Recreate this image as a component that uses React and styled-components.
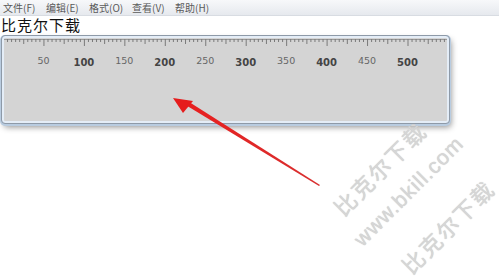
import React from "react";
import styled, { createGlobalStyle } from "styled-components";

const Global = createGlobalStyle`
  html, body { margin: 0; padding: 0; background: #fff; }
  body { font-family: "Noto Sans CJK SC", "Liberation Sans", sans-serif; overflow: hidden; }
`;

const Page = styled.div`
  position: relative;
  width: 499px;
  height: 278px;
  overflow: hidden;
  background: #fff;
`;

const MenuBar = styled.div`
  display: flex;
  height: 15px;
  align-items: center;
  padding-left: 3px;
  gap: 10px;
  background: linear-gradient(#f7f8fa, #e6e9ee);
  border-bottom: 1px solid #d8dce2;
`;

const MenuItem = styled.span`
  font-size: 10px;
  color: #5a5a5a;
  line-height: 15px;
  width: 33px;
  white-space: nowrap;
`;

const Title = styled.div`
  font-size: 15px;
  line-height: 18px;
  letter-spacing: 1px;
  color: #111;
  padding-left: 1px;
  height: 20px;
`;

const RulerFrame = styled.div`
  margin-left: 2px;
  width: 443px;
  height: 83px;
  border: 2px solid #e4edf7;
  outline: 1px solid #8e9aa8;
  border-radius: 3px;
  background: #d4d4d4;
  box-shadow: 0 1px 0 2px #b9cce0, 2px 4px 6px rgba(0, 0, 0, 0.45);
  overflow: hidden;
`;

const Scale = styled.svg`
  display: block;
`;

const Overlay = styled.svg`
  position: absolute;
  left: 0;
  top: 0;
  pointer-events: none;
`;

const Watermark = styled.div`
  position: absolute;
  font-size: ${(p) => p.$size}px;
  color: #d6d6d6;
  white-space: nowrap;
  transform: rotate(-45deg);
  transform-origin: left bottom;
  text-shadow: 0 0 1px #c2c2c2;
  font-family: ${(p) => (p.$latin ? '"Liberation Sans", sans-serif' : '"Noto Sans CJK SC", sans-serif')};
  letter-spacing: ${(p) => p.$spacing || 0}px;
`;

const menus = ["文件(F)", "编辑(E)", "格式(O)", "查看(V)", "帮助(H)"];

function RulerScale() {
  const scale = 0.809;
  const origin = -1;
  const ticks = [];
  const labels = [];
  for (let v = 0; v <= 550; v += 5) {
    const x = origin + v * scale;
    if (x < 0 || x > 443) continue;
    const len = v % 50 === 0 ? 7 : v % 25 === 0 ? 5 : 3;
    ticks.push(
      <line key={v} x1={x} x2={x} y1={0} y2={len} stroke="#7a7a7a" strokeWidth="1" />
    );
    if (v % 50 === 0 && v > 0 && v <= 500) {
      const bold = v % 100 === 0;
      labels.push(
        <text
          key={"l" + v}
          x={x}
          y={bold ? 28 : 26}
          textAnchor="middle"
          fontFamily='"DejaVu Sans", "Liberation Sans", sans-serif'
          fontSize={bold ? 10 : 9.5}
          fontWeight={bold ? "bold" : "normal"}
          fill={bold ? "#444" : "#666"}
        >
          {v}
        </text>
      );
    }
  }
  return (
    <Scale width="443" height="32">
      <line x1="0" x2="443" y1="1.5" y2="1.5" stroke="#9a9a9a" strokeWidth="1" />
      <g transform="translate(0.5,1)">{ticks}</g>
      {labels}
    </Scale>
  );
}

export default function App() {
  return (
    <Page>
      <Global />
      <MenuBar>
        {menus.map((m) => (
          <MenuItem key={m}>{m}</MenuItem>
        ))}
      </MenuBar>
      <Title>比克尔下载</Title>
      <RulerFrame>
        <RulerScale />
      </RulerFrame>

      <Watermark $size={22} $spacing={2} style={{ left: 348, top: 190 }}>比克尔下载</Watermark>
      <Watermark $size={21} $latin $spacing={1} style={{ left: 366, top: 227 }}>www.bkill.com</Watermark>
      <Watermark $size={22} $spacing={2} style={{ left: 416, top: 248 }}>比克尔下载</Watermark>

      <Overlay width="499" height="278">
        <defs>
          <linearGradient id="ag" x1="0" y1="0" x2="1" y2="1">
            <stop offset="0" stopColor="#e81e1e" />
            <stop offset="1" stopColor="#d83030" />
          </linearGradient>
        </defs>
        <polygon points="320,185 319,186 184,104 186,100" fill="url(#ag)" />
        <polygon points="173,98 193,101 183,113" fill="#e51c1c" />
      </Overlay>
    </Page>
  );
}
